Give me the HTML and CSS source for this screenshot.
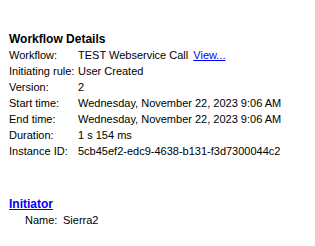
FILE: index.html
```html
<!DOCTYPE html>
<html lang="en">
<head>
    <meta charset="UTF-8">
    <title>Workflow Details</title>
    <link rel="stylesheet" href="styles.css">
</head>
<body>

<div class="panel">
    <h2 class="title">Workflow Details</h2>
    <div class="details">
        <span class="label">Workflow:</span>
        <span class="value">TEST Webservice Call <a href="#" class="link">View...</a></span>

        <span class="label">Initiating rule:</span>
        <span class="value">User Created</span>

        <span class="label">Version:</span>
        <span class="value">2</span>

        <span class="label">Start time:</span>
        <span class="value">Wednesday, November 22, 2023 9:06 AM</span>

        <span class="label">End time:</span>
        <span class="value">Wednesday, November 22, 2023 9:06 AM</span>

        <span class="label">Duration:</span>
        <span class="value">1 s 154 ms</span>

        <span class="label">Instance ID:</span>
        <span class="value">5cb45ef2-edc9-4638-b131-f3d7300044c2</span>
    </div>

    <h3 class="section"><a href="#">Initiator</a></h3>
    <div class="initiator">
        <span class="label">Name:</span>
        <span class="value">Sierra2</span>
    </div>
</div>

</body>
</html>
```

FILE: styles.css
```css
body {
    margin: 0;
    padding: 0;
    background-color: #ffffff;
    font-family: 'Liberation Sans', Arial, sans-serif;
    font-size: 11px;
    color: #000000;
}

.panel {
    padding: 31px 9px 0 9px;
}

.title {
    margin: 0;
    font-size: 12px;
    font-weight: 700;
    line-height: 16px;
}

.details {
    display: grid;
    grid-template-columns: 69px auto;
    grid-auto-rows: 16px;
    line-height: 16px;
}

.link {
    color: #0000ff;
    margin-left: 2px;
}

.section {
    margin: 37px 0 0 0;
    font-size: 12px;
    font-weight: 700;
    line-height: 16px;
}

.section a {
    color: #0000ff;
}

.initiator {
    display: grid;
    grid-template-columns: 38px auto;
    padding-left: 16px;
    line-height: 16px;
}
```
